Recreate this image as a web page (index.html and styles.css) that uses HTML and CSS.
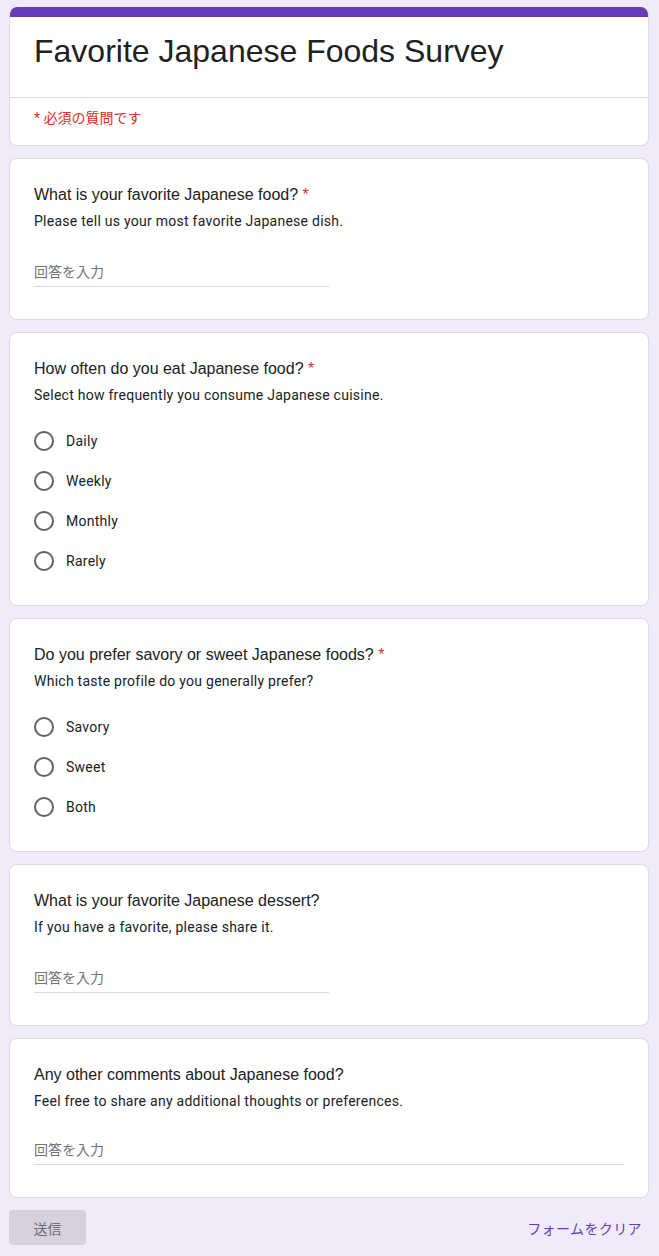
FILE: index.html
```html
<!DOCTYPE html>
<html lang="ja">
<head>
<meta charset="utf-8">
<title>Favorite Japanese Foods Survey</title>
<link rel="stylesheet" href="styles.css">
</head>
<body>
<main class="form">
  <section class="card header-card">
    <div class="accent"></div>
    <h1 class="form-title">Favorite Japanese Foods Survey</h1>
    <div class="divider"></div>
    <p class="required-note">* 必須の質問です</p>
  </section>

  <section class="card question">
    <h2 class="q-title">What is your favorite Japanese food? <span class="star">*</span></h2>
    <p class="q-desc">Please tell us your most favorite Japanese dish.</p>
    <div class="text-input half"><span class="placeholder">回答を入力</span></div>
  </section>

  <section class="card question">
    <h2 class="q-title">How often do you eat Japanese food? <span class="star">*</span></h2>
    <p class="q-desc">Select how frequently you consume Japanese cuisine.</p>
    <ul class="options">
      <li class="option"><span class="radio"></span><span class="opt-label">Daily</span></li>
      <li class="option"><span class="radio"></span><span class="opt-label">Weekly</span></li>
      <li class="option"><span class="radio"></span><span class="opt-label">Monthly</span></li>
      <li class="option"><span class="radio"></span><span class="opt-label">Rarely</span></li>
    </ul>
  </section>

  <section class="card question">
    <h2 class="q-title">Do you prefer savory or sweet Japanese foods? <span class="star">*</span></h2>
    <p class="q-desc">Which taste profile do you generally prefer?</p>
    <ul class="options">
      <li class="option"><span class="radio"></span><span class="opt-label">Savory</span></li>
      <li class="option"><span class="radio"></span><span class="opt-label">Sweet</span></li>
      <li class="option"><span class="radio"></span><span class="opt-label">Both</span></li>
    </ul>
  </section>

  <section class="card question">
    <h2 class="q-title">What is your favorite Japanese dessert?</h2>
    <p class="q-desc">If you have a favorite, please share it.</p>
    <div class="text-input half"><span class="placeholder">回答を入力</span></div>
  </section>

  <section class="card question">
    <h2 class="q-title">Any other comments about Japanese food?</h2>
    <p class="q-desc">Feel free to share any additional thoughts or preferences.</p>
    <div class="text-input full"><span class="placeholder">回答を入力</span></div>
  </section>

  <div class="actions">
    <button class="submit" type="button">送信</button>
    <a class="clear" href="#">フォームをクリア</a>
  </div>
</main>
</body>
</html>
```

FILE: styles.css
```css
html, body {
  margin: 0;
  padding: 0;
  background: #f0ebf8;
}

body {
  font-family: Roboto, "Noto Sans CJK JP", sans-serif;
  color: #202124;
}

.form {
  width: 640px;
  margin: 0 0 0 9px;
  padding-top: 7px;
  display: flex;
  flex-direction: column;
  gap: 12px;
}

.card {
  background: #fff;
  border: 1px solid #dadce0;
  border-radius: 8px;
  box-sizing: border-box;
  overflow: hidden;
}

.header-card {
  border-top: none;
}

.accent {
  height: 10px;
  background: #673ab7;
  margin: 0 -1px;
}

.form-title {
  margin: 0;
  padding: 14px 24px 0;
  font-family: "Liberation Sans", Arial, sans-serif;
  font-weight: 400;
  font-size: 32px;
  line-height: 40px;
  height: 74px;
  box-sizing: border-box;
  color: #202124;
}

.divider {
  height: 1px;
  background: #dadce0;
  margin-top: 6px;
}

.required-note {
  margin: 0;
  padding: 10px 24px 17px;
  font-family: Roboto, "Noto Sans CJK JP", sans-serif;
  font-size: 14px;
  line-height: 20px;
  color: #d93025;
}

.question {
  padding: 24px 24px 24px;
}

.q-title {
  margin: 0;
  font-family: "Liberation Sans", Arial, sans-serif;
  font-weight: 400;
  font-size: 16px;
  line-height: 24px;
  color: #202124;
}

.star {
  color: #d93025;
}

.q-desc {
  margin: 4px 0 0;
  font-family: Roboto, sans-serif;
  font-size: 14px;
  line-height: 20px;
  letter-spacing: 0.26px;
  color: #202124;
}

.text-input {
  margin-top: 24px;
  height: 31px;
  border-bottom: 1px solid #dadce0;
  display: flex;
  align-items: center;
  margin-bottom: 8px;
}

.text-input.half {
  width: 50%;
}

.text-input.full {
  width: 100%;
  margin-top: 22px;
  margin-bottom: 8px;
}

.placeholder {
  font-family: Roboto, "Noto Sans CJK JP", sans-serif;
  font-size: 14px;
  color: #70757a;
}

.options {
  list-style: none;
  margin: 16px 0 0;
  padding: 0;
}

.option {
  height: 40px;
  display: flex;
  align-items: center;
}

.radio {
  width: 20px;
  height: 20px;
  border: 2px solid #5f6368;
  border-radius: 50%;
  box-sizing: border-box;
  flex: none;
}

.opt-label {
  margin-left: 12px;
  font-family: Roboto, sans-serif;
  font-size: 14px;
  letter-spacing: 0.26px;
  color: #202124;
}

.actions {
  display: flex;
  justify-content: space-between;
  align-items: center;
  margin-bottom: 11px;
}

.submit {
  width: 77px;
  height: 35px;
  border: none;
  border-radius: 4px;
  background: #d5d1dd;
  color: #6f6b78;
  font-family: "Noto Sans CJK JP", sans-serif;
  font-size: 14px;
  padding: 0;
}

.clear {
  color: #673ab7;
  text-decoration: none;
  font-family: "Noto Sans CJK JP", sans-serif;
  font-size: 14px;
  letter-spacing: 0.4px;
  margin-right: 7px;
}
```
